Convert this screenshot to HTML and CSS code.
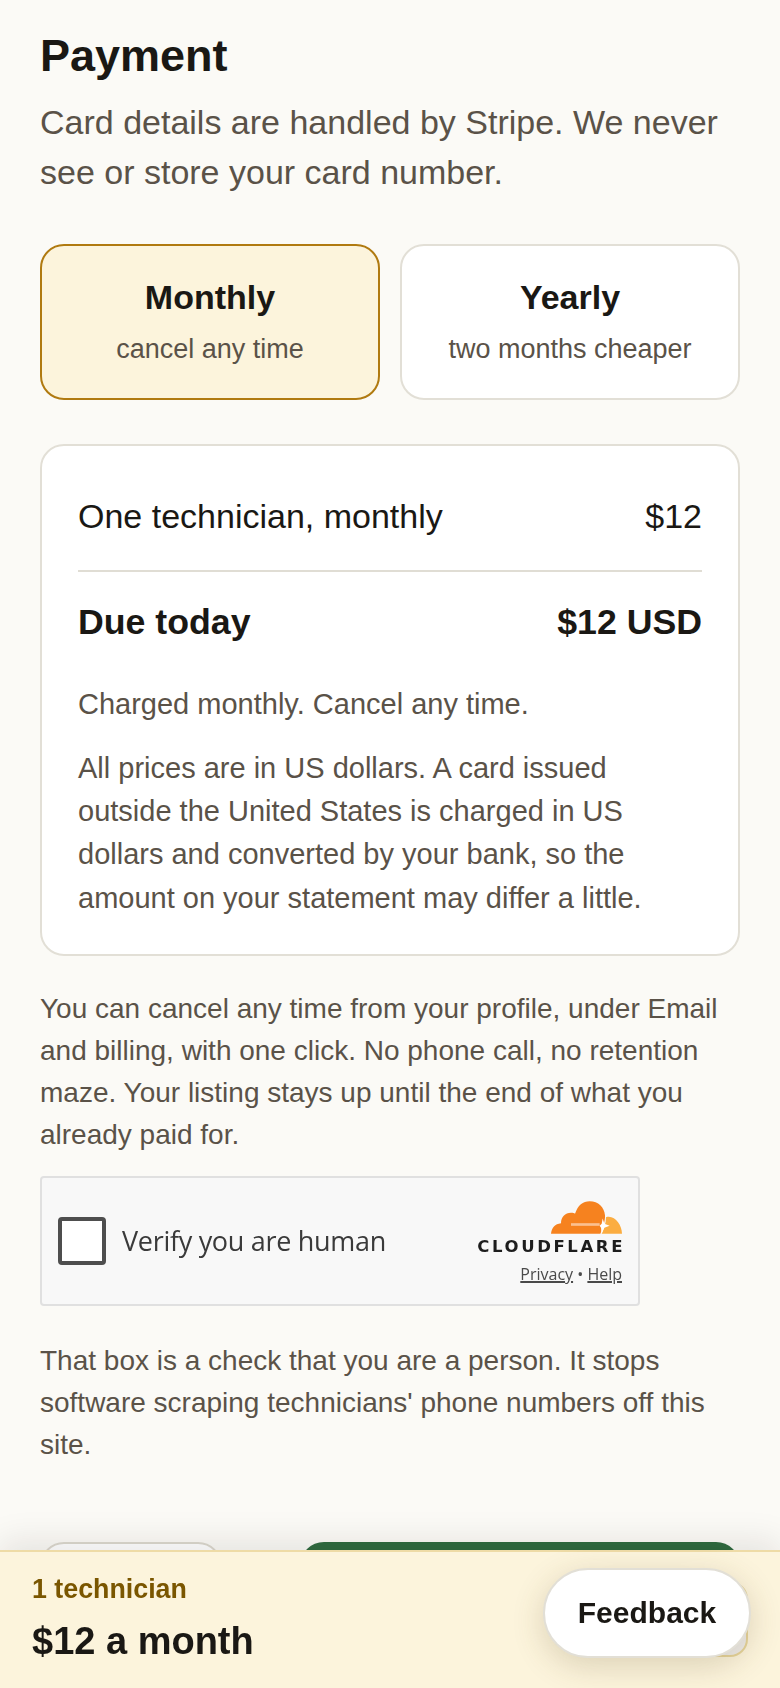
FILE: index.html
```html
<!DOCTYPE html>
<html lang="en">
<head>
<meta charset="utf-8">
<title>Payment</title>
<link rel="stylesheet" href="styles.css">
</head>
<body>
<main class="page">
  <h1 class="title">Payment</h1>
  <p class="lede">Card details are handled by Stripe. We never see or store your card number.</p>

  <div class="plans">
    <button class="plan plan-active"><span class="plan-name">Monthly</span><span class="plan-note">cancel any time</span></button>
    <button class="plan"><span class="plan-name">Yearly</span><span class="plan-note">two months cheaper</span></button>
  </div>

  <section class="summary">
    <div class="row row-line"><span>One technician, monthly</span><span>$12</span></div>
    <div class="row row-total"><span>Due today</span><span>$12 USD</span></div>
    <p class="fine fine-first">Charged monthly. Cancel any time.</p>
    <p class="fine">All prices are in US dollars. A card issued outside the United States is charged in US dollars and converted by your bank, so the amount on your statement may differ a little.</p>
  </section>

  <p class="body-text">You can cancel any time from your profile, under Email and billing, with one click. No phone call, no retention maze. Your listing stays up until the end of what you already paid for.</p>

  <div class="turnstile">
    <span class="ts-box"></span>
    <span class="ts-label">Verify you are human</span>
    <div class="ts-brand">
      <svg class="ts-cloud" viewBox="0 0 213 98" aria-hidden="true">
        <path fill="#f6821f" d="M0 98C2 80 12 68 30 66C30 48 42 35 60 35C66 35 70 36 72 38C80 12 96 0 116 0C142 0 160 18 162 42C163 60 155 80 148 98Z"/>
        <path fill="#fbad41" d="M165 48C190 40 213 70 213 98L152 98C160 80 165 65 165 48Z"/>
        <path fill="#fbc090" d="M60 66H146V74H60Z"/>
        <path fill="#fff" d="M155 52L160 68L176 74L160 80L152 98L150 80L146 74L152 68Z"/>
      </svg>
      <span class="ts-logo">CLOUDFLARE</span>
      <span class="ts-links"><span class="ts-link">Privacy</span> • <span class="ts-link">Help</span></span>
    </div>
  </div>

  <p class="body-text body-after">That box is a check that you are a person. It stops software scraping technicians' phone numbers off this site.</p>

  <div class="actions">
    <button class="btn-back" aria-label="Back"></button>
    <button class="btn-pay" aria-label="Continue"></button>
  </div>
</main>

<div class="paybar">
  <div class="paybar-info">
    <span class="paybar-count">1 technician</span>
    <span class="paybar-price">$12 a month</span>
  </div>
  <button class="paybar-btn" aria-label="Continue"></button>
</div>
<button class="feedback">Feedback</button>
</body>
</html>
```
FILE: styles.css
```css
* { box-sizing: border-box; }
html, body { margin: 0; height: 1688px; overflow: hidden; }
body {
  background: #fbfaf6;
  color: #1a1814;
  font-family: "Liberation Sans", Arial, sans-serif;
}
button { font-family: inherit; }
.page { padding: 28px 40px 0; }
.title { margin: 0; font-size: 45px; line-height: 56px; font-weight: 700; }
.lede { margin: 13px 0 0; font-size: 34px; line-height: 50.4px; color: #5a5248; }
.plans { display: grid; grid-template-columns: 1fr 1fr; gap: 20px; margin-top: 46px; }
.plan {
  display: flex; flex-direction: column; align-items: center; justify-content: center;
  height: 156px; background: #fff; border: 2px solid #e2dfd6; border-radius: 24px; color: #1a1814; padding: 0;
}
.plan-active { background: #fcf4dc; border-color: #b07a10; }
.plan-name { font-size: 34px; line-height: 44px; font-weight: 700; }
.plan-note { margin-top: 10px; font-size: 27px; line-height: 40px; color: #5a5248; }
.summary {
  margin-top: 44px; padding: 45px 36px 34px; background: #fff;
  border: 2px solid #e2dfd6; border-radius: 24px;
}
.row { display: flex; justify-content: space-between; }
.row-line { font-size: 34px; line-height: 50px; padding-bottom: 29px; border-bottom: 2px solid #e0ddd4; }
.row-total { font-size: 35.7px; line-height: 50px; font-weight: 700; margin-top: 25px; }
.fine { margin: 21px 0 0; font-size: 29px; line-height: 43.2px; color: #5a5248; }
.fine-first { margin-top: 36px; }
.body-text { margin: 32px 0 0; font-size: 28px; line-height: 42px; color: #5a5248; }
.turnstile {
  display: flex; align-items: center; justify-content: space-between;
  width: 600px; height: 130px; margin-top: 20px; padding: 0 16px;
  background: #f8f8f8; border: 2px solid #e0e0e0; border-radius: 4px; filter: blur(.6px);
}
.ts-box { width: 48px; height: 48px; flex: none; background: #fff; border: 4px solid #4e4e4e; border-radius: 4px; margin-right: 16px; }
.ts-label { flex: 1; font-family: "Open Sans", sans-serif; font-size: 27px; color: #3a3a3a; letter-spacing: -.3px; }
.ts-brand { display: flex; flex-direction: column; align-items: flex-end; align-self: stretch; padding-top: 23px; }
.ts-cloud { width: 71px; height: 33px; display: block; }
.ts-logo { font-family: "DejaVu Sans", sans-serif; font-size: 16.5px; line-height: 20px; font-weight: 700; letter-spacing: 2.6px; color: #1d1d1d; margin-top: 3px; margin-right: -3px; white-space: nowrap; }
.ts-links { font-family: "Open Sans", sans-serif; font-size: 16px; line-height: 20px; margin-top: 7px; color: #4a4a4a; }
.ts-link { text-decoration: underline; text-decoration-thickness: 2px; }
.body-after { margin-top: 34px; }
.actions { display: flex; gap: 78px; margin-top: 76px; }
.btn-back { width: 182px; height: 100px; background: #fff; border: 2px solid #dcd8ce; border-radius: 24px; flex: none; }
.btn-pay { flex: 1; height: 100px; background: #2f6b3f; border: 0; border-radius: 24px; }
.paybar {
  position: fixed; left: 0; right: 0; bottom: 0; height: 138px;
  display: flex; justify-content: space-between; align-items: flex-start;
  padding: 19px 32px 31px;
  background: #fcf4dc; border-top: 2px solid #eedba6; box-shadow: 0 -8px 32px rgba(26,24,20,.1);
}
.paybar-info { display: flex; flex-direction: column; }
.paybar-count { font-size: 26.8px; line-height: 36px; font-weight: 700; color: #7a5600; }
.paybar-price { margin-top: 9px; font-size: 38px; line-height: 50px; font-weight: 700; }
.paybar-btn { width: 120px; height: 76px; align-self: flex-end; background: #efedea; border: 2px solid #e6d49b; border-radius: 18px; }
.feedback {
  position: fixed; right: 29px; bottom: 30px; width: 208px; height: 90px;
  background: #fff; border: 2px solid #e2dfd6; border-radius: 45px;
  font-size: 30px; font-weight: 700; color: #1a1814; padding: 0;
  box-shadow: 0 8px 32px rgba(90,70,30,.2);
}
```
